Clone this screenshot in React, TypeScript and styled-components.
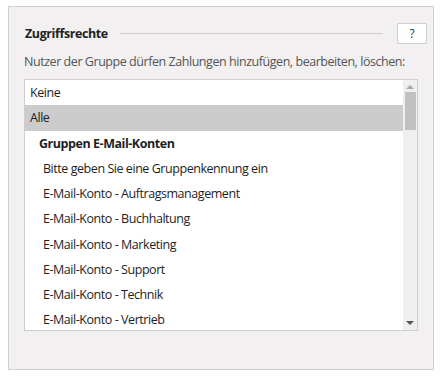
import React from "react";
import styled, { createGlobalStyle } from "styled-components";

const Global = createGlobalStyle`
  html, body { margin: 0; padding: 0; background: #ffffff; }
  body { font-family: "Open Sans", "Noto Sans", sans-serif; }
`;

const Page = styled.div`
  padding: 6px 7px 10px 8px;
`;

const Panel = styled.section`
  box-sizing: border-box;
  width: 426px;
  height: 364px;
  background: #f2f0f0;
  border: 1px solid #d2d0d0;
  padding: 16px 6px 0 15px;
  display: flex;
  flex-direction: column;
`;

const Header = styled.div`
  display: flex;
  align-items: center;
  gap: 10px;
  height: 21px;
`;

const Title = styled.h3`
  margin: 0 0 0 1px;
  font-size: 12.5px;
  font-weight: 700;
  color: #222;
  letter-spacing: -0.4px;
`;

const Rule = styled.div`
  flex: 1;
  height: 1px;
  background: #cfcdcd;
  margin-left: 2px;
  margin-right: 4px;
`;

const HelpButton = styled.button`
  box-sizing: border-box;
  width: 30px;
  height: 21px;
  background: #ffffff;
  border: 1px solid #cfcdcd;
  border-radius: 1px;
  font-family: inherit;
  font-size: 12px;
  color: #333;
  padding: 0;
  cursor: pointer;
`;

const Description = styled.p`
  margin: 9px 0 0 0;
  font-size: 12.5px;
  color: #555;
  letter-spacing: -0.45px;
  line-height: 18px;
`;

const ListBox = styled.div`
  box-sizing: border-box;
  margin-top: 8px;
  width: 394px;
  height: 252px;
  border: 1px solid #cfcdcd;
  background: #ffffff;
  display: flex;
  overflow: hidden;
`;

const Items = styled.ul`
  list-style: none;
  margin: 0;
  padding: 0;
  flex: 1;
`;

const Item = styled.li<{ $selected?: boolean; $group?: boolean; $indent?: number }>`
  height: 25.25px;
  display: flex;
  align-items: center;
  padding-left: ${(p) => p.$indent ?? 5}px;
  font-size: 12.5px;
  letter-spacing: -0.45px;
  color: #1e1e1e;
  font-weight: ${(p) => (p.$group ? 700 : 400)};
  background: ${(p) => (p.$selected ? "#cccccc" : "transparent")};
`;

const ScrollBar = styled.div`
  width: 14px;
  background: #efefef;
  display: flex;
  flex-direction: column;
  align-items: center;
  padding-top: 5px;
  padding-bottom: 5px;
`;

const Arrow = styled.div<{ $down?: boolean }>`
  width: 0;
  height: 0;
  border-left: 4px solid transparent;
  border-right: 4px solid transparent;
  ${(p) =>
    p.$down
      ? "border-top: 4px solid #555;"
      : "border-bottom: 4px solid #a8a8a8;"}
`;

const Thumb = styled.div`
  width: 11px;
  height: 38px;
  margin-top: 3px;
  background: #c1c1c1;
`;

const Spacer = styled.div`
  flex: 1;
`;

const items = [
  "E-Mail-Konto - Auftragsmanagement",
  "E-Mail-Konto - Buchhaltung",
  "E-Mail-Konto - Marketing",
  "E-Mail-Konto - Support",
  "E-Mail-Konto - Technik",
  "E-Mail-Konto - Vertrieb",
];

export default function App() {
  return (
    <>
      <Global />
      <Page>
        <Panel>
          <Header>
            <Title>Zugriffsrechte</Title>
            <Rule />
            <HelpButton>?</HelpButton>
          </Header>
          <Description>
            Nutzer der Gruppe dürfen Zahlungen hinzufügen, bearbeiten, löschen:
          </Description>
          <ListBox>
            <Items>
              <Item>Keine</Item>
              <Item $selected>Alle</Item>
              <Item $group $indent={14}>Gruppen E-Mail-Konten</Item>
              <Item $indent={18}>Bitte geben Sie eine Gruppenkennung ein</Item>
              {items.map((t) => (
                <Item key={t} $indent={18}>
                  {t}
                </Item>
              ))}
            </Items>
            <ScrollBar>
              <Arrow />
              <Thumb />
              <Spacer />
              <Arrow $down />
            </ScrollBar>
          </ListBox>
        </Panel>
      </Page>
    </>
  );
}
